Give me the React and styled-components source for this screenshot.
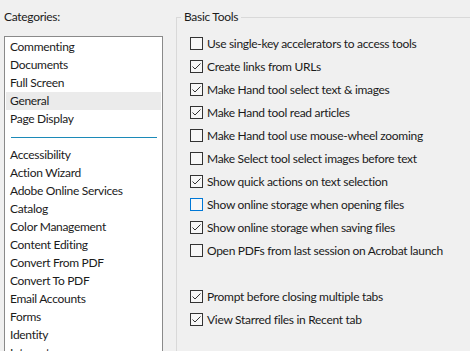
import React from "react";
import styled, { createGlobalStyle } from "styled-components";

const Global = createGlobalStyle`
  html, body { margin: 0; padding: 0; }
  body {
    background: #f0f0f0;
    width: 470px;
    height: 351px;
    overflow: hidden;
    font-family: Lato, "Liberation Sans", sans-serif;
    font-size: 12px;
    letter-spacing: -0.3px;
    color: #1b1b1b;
  }
`;

const Page = styled.div`
  display: flex;
  align-items: flex-start;
  padding: 9px 0 0 4px;
  gap: 13px;
`;

const LeftCol = styled.div`
  display: flex;
  flex-direction: column;
  width: 159px;
`;

const Label = styled.div`
  line-height: 16px;
  height: 16px;
  margin-bottom: 11px;
`;

const ListBox = styled.div`
  box-sizing: border-box;
  height: 400px;
  background: #ffffff;
  border: 1px solid #8a8a8a;
  padding: 1px 1px 0 1px;
  overflow: hidden;
`;

const Item = styled.div`
  height: 18px;
  line-height: 18px;
  padding-left: 4px;
  background: ${(p) => (p.$selected ? "#ebebeb" : "transparent")};
  white-space: nowrap;
`;

const Separator = styled.div`
  height: 18px;
  display: flex;
  align-items: center;
  padding: 0 4px 0 5px;
  &::after {
    content: "";
    flex: 1;
    height: 1px;
    background: #1c8ab8;
  }
`;

const Group = styled.fieldset`
  flex: 1;
  margin: 0;
  padding: 7px 0 0 0;
  border: 1px solid #d9d9d9;
  border-right: none;
  border-bottom: none;
  min-height: 400px;
`;

const Legend = styled.legend`
  padding: 0 3px;
  margin-left: 4px;
  line-height: 16px;
`;

const Options = styled.div`
  display: flex;
  flex-direction: column;
  padding-left: 13px;
`;

const Row = styled.label`
  display: flex;
  align-items: center;
  height: 23px;
  gap: 4px;
  white-space: nowrap;
`;

const Spacer = styled.div`
  height: 23px;
`;

const Box = styled.span`
  box-sizing: border-box;
  width: 13px;
  height: 13px;
  flex: none;
  border: 1px solid ${(p) => (p.$focus ? "#0078d7" : "#333333")};
  background: #f7f7f7;
  display: flex;
  align-items: center;
  justify-content: center;
`;

function Check({ checked, focus }) {
  return (
    <Box $focus={focus}>
      {checked && (
        <svg width="11" height="11" viewBox="0 0 11 11">
          <path d="M1.5 5.5 L4 8 L9.5 2.5" fill="none" stroke="#333" strokeWidth="1" />
        </svg>
      )}
    </Box>
  );
}

const categoriesTop = ["Commenting", "Documents", "Full Screen", "General", "Page Display"];
const categoriesBottom = [
  "Accessibility",
  "Action Wizard",
  "Adobe Online Services",
  "Catalog",
  "Color Management",
  "Content Editing",
  "Convert From PDF",
  "Convert To PDF",
  "Email Accounts",
  "Forms",
  "Identity",
  "Internet",
];

const options = [
  { text: "Use single-key accelerators to access tools", checked: false },
  { text: "Create links from URLs", checked: true },
  { text: "Make Hand tool select text & images", checked: true },
  { text: "Make Hand tool read articles", checked: true },
  { text: "Make Hand tool use mouse-wheel zooming", checked: false },
  { text: "Make Select tool select images before text", checked: false },
  { text: "Show quick actions on text selection", checked: true },
  { text: "Show online storage when opening files", checked: false, focus: true },
  { text: "Show online storage when saving files", checked: true },
  { text: "Open PDFs from last session on Acrobat launch", checked: false },
  null,
  { text: "Prompt before closing multiple tabs", checked: true },
  { text: "View Starred files in Recent tab", checked: true },
];

export default function App() {
  return (
    <>
      <Global />
      <Page>
        <LeftCol>
          <Label>Categories:</Label>
          <ListBox>
            {categoriesTop.map((c) => (
              <Item key={c} $selected={c === "General"}>{c}</Item>
            ))}
            <Separator />
            {categoriesBottom.map((c) => (
              <Item key={c}>{c}</Item>
            ))}
          </ListBox>
        </LeftCol>
        <Group>
          <Legend>Basic Tools</Legend>
          <Options>
            {options.map((o, i) =>
              o ? (
                <Row key={i}>
                  <Check checked={o.checked} focus={o.focus} />
                  <span>{o.text}</span>
                </Row>
              ) : (
                <Spacer key={i} />
              )
            )}
          </Options>
        </Group>
      </Page>
    </>
  );
}
